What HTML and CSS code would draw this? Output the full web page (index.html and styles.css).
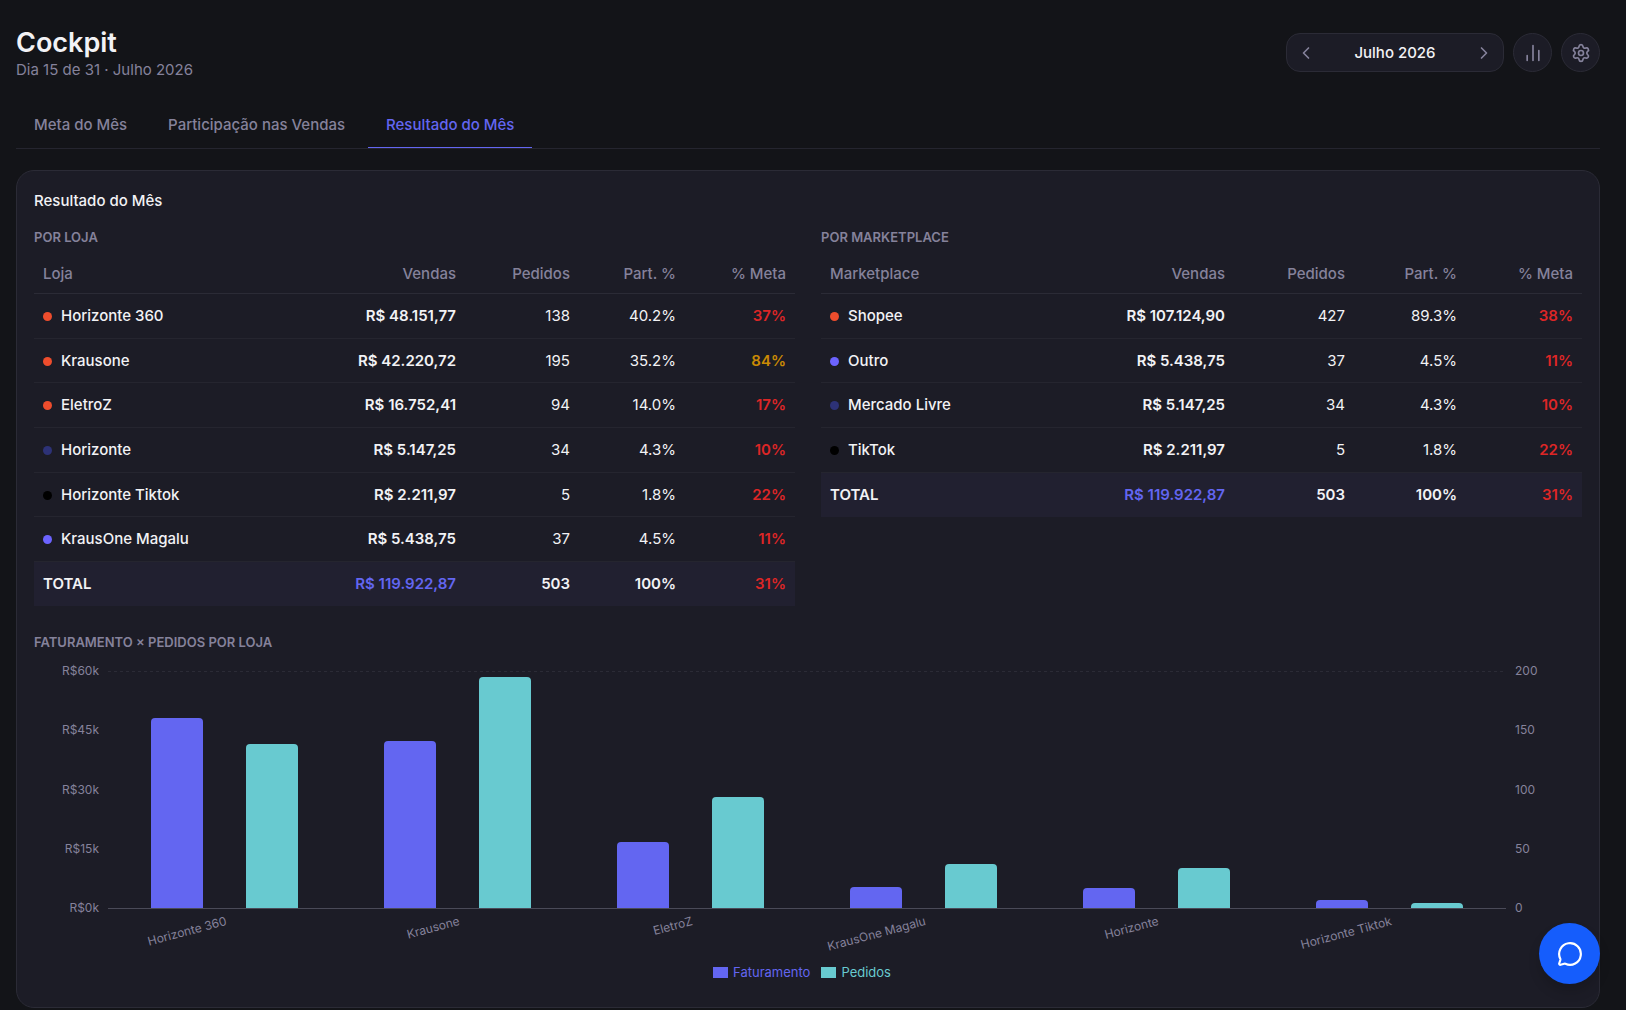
FILE: index.html
```html
<!DOCTYPE html>
<html lang="pt-BR">
<head>
<meta charset="utf-8">
<meta name="viewport" content="width=device-width, initial-scale=1">
<title>Cockpit</title>
<link rel="stylesheet" href="styles.css">
</head>
<body>
<main class="page">
  <header class="page-header">
    <div>
      <h1 class="page-title">Cockpit</h1>
      <p class="page-subtitle">Dia 15 de 31 · Julho 2026</p>
    </div>
    <div class="toolbar">
      <div class="month-picker">
        <button class="month-step" type="button" aria-label="Mês anterior">
          <svg class="icon" viewBox="0 0 24 24"><path d="m15 18-6-6 6-6"/></svg>
        </button>
        <span class="month-label">Julho 2026</span>
        <button class="month-step" type="button" aria-label="Próximo mês">
          <svg class="icon" viewBox="0 0 24 24"><path d="m9 18 6-6-6-6"/></svg>
        </button>
      </div>
      <button class="round-button" type="button" aria-label="Gráficos">
        <svg class="icon" viewBox="0 0 24 24"><path d="M5 21v-6M12 21V3M19 21V9"/></svg>
      </button>
      <button class="round-button" type="button" aria-label="Configurações">
        <svg class="icon" viewBox="0 0 24 24"><path d="M9.671 4.136a2.34 2.34 0 0 1 4.659 0 2.34 2.34 0 0 0 3.319 1.915 2.34 2.34 0 0 1 2.33 4.033 2.34 2.34 0 0 0 0 3.831 2.34 2.34 0 0 1-2.33 4.033 2.34 2.34 0 0 0-3.319 1.915 2.34 2.34 0 0 1-4.659 0 2.34 2.34 0 0 0-3.32-1.915 2.34 2.34 0 0 1-2.33-4.033 2.34 2.34 0 0 0 0-3.831A2.34 2.34 0 0 1 6.35 6.051a2.34 2.34 0 0 0 3.319-1.915"/><circle cx="12" cy="12" r="3"/></svg>
      </button>
    </div>
  </header>

  <nav class="tabs">
    <button class="tab" type="button">Meta do Mês</button>
    <button class="tab" type="button">Participação nas Vendas</button>
    <button class="tab tab-active" type="button" aria-current="page">Resultado do Mês</button>
  </nav>

  <section class="card">
    <h2 class="card-title">Resultado do Mês</h2>
    <div class="tables">
      <section>
        <h3 class="section-title">POR LOJA</h3>
        <table class="table">
          <colgroup><col><col class="col-vendas"><col class="col-pedidos"><col class="col-part"><col class="col-meta"></colgroup>
          <thead>
            <tr><th>Loja</th><th>Vendas</th><th>Pedidos</th><th>Part. %</th><th>% Meta</th></tr>
          </thead>
          <tbody>
            <tr><td><span class="dot dot-shopee"></span>Horizonte 360</td><td>R$ 48.151,77</td><td>138</td><td>40.2%</td><td class="low">37%</td></tr>
            <tr><td><span class="dot dot-shopee"></span>Krausone</td><td>R$ 42.220,72</td><td>195</td><td>35.2%</td><td class="mid">84%</td></tr>
            <tr><td><span class="dot dot-shopee"></span>EletroZ</td><td>R$ 16.752,41</td><td>94</td><td>14.0%</td><td class="low">17%</td></tr>
            <tr><td><span class="dot dot-mercado"></span>Horizonte</td><td>R$ 5.147,25</td><td>34</td><td>4.3%</td><td class="low">10%</td></tr>
            <tr><td><span class="dot dot-tiktok"></span>Horizonte Tiktok</td><td>R$ 2.211,97</td><td>5</td><td>1.8%</td><td class="low">22%</td></tr>
            <tr><td><span class="dot dot-outro"></span>KrausOne Magalu</td><td>R$ 5.438,75</td><td>37</td><td>4.5%</td><td class="low">11%</td></tr>
          </tbody>
          <tfoot>
            <tr><td>TOTAL</td><td>R$ 119.922,87</td><td>503</td><td>100%</td><td class="low">31%</td></tr>
          </tfoot>
        </table>
      </section>
      <section>
        <h3 class="section-title">POR MARKETPLACE</h3>
        <table class="table table-marketplace">
          <colgroup><col><col class="col-vendas"><col class="col-pedidos"><col class="col-part"><col class="col-meta"></colgroup>
          <thead>
            <tr><th>Marketplace</th><th>Vendas</th><th>Pedidos</th><th>Part. %</th><th>% Meta</th></tr>
          </thead>
          <tbody>
            <tr><td><span class="dot dot-shopee"></span>Shopee</td><td>R$ 107.124,90</td><td>427</td><td>89.3%</td><td class="low">38%</td></tr>
            <tr><td><span class="dot dot-outro"></span>Outro</td><td>R$ 5.438,75</td><td>37</td><td>4.5%</td><td class="low">11%</td></tr>
            <tr><td><span class="dot dot-mercado"></span>Mercado Livre</td><td>R$ 5.147,25</td><td>34</td><td>4.3%</td><td class="low">10%</td></tr>
            <tr><td><span class="dot dot-tiktok"></span>TikTok</td><td>R$ 2.211,97</td><td>5</td><td>1.8%</td><td class="low">22%</td></tr>
          </tbody>
          <tfoot>
            <tr><td>TOTAL</td><td>R$ 119.922,87</td><td>503</td><td>100%</td><td class="low">31%</td></tr>
          </tfoot>
        </table>
      </section>
    </div>

    <section class="chart-section">
      <h3 class="section-title">FATURAMENTO × PEDIDOS POR LOJA</h3>
      <svg class="chart" viewBox="0 0 1548 296" role="img" aria-label="Faturamento e pedidos por loja">
        <path class="grid-line" d="M74 10H1472"/>
        <path class="axis-line" d="M74 247H1472"/>
        <g class="bar-faturamento">
          <path d="M117 247V61a4 4 0 0 1 4-4h44a4 4 0 0 1 4 4V247z"/>
          <path d="M350 247V84a4 4 0 0 1 4-4h44a4 4 0 0 1 4 4V247z"/>
          <path d="M583 247V185a4 4 0 0 1 4-4h44a4 4 0 0 1 4 4V247z"/>
          <path d="M816 247V230a4 4 0 0 1 4-4h44a4 4 0 0 1 4 4V247z"/>
          <path d="M1049 247V231a4 4 0 0 1 4-4h44a4 4 0 0 1 4 4V247z"/>
          <path d="M1282 247V243a4 4 0 0 1 4-4h44a4 4 0 0 1 4 4V247z"/>
        </g>
        <g class="bar-pedidos">
          <path d="M212 247V87a4 4 0 0 1 4-4h44a4 4 0 0 1 4 4V247z"/>
          <path d="M445 247V20a4 4 0 0 1 4-4h44a4 4 0 0 1 4 4V247z"/>
          <path d="M678 247V140a4 4 0 0 1 4-4h44a4 4 0 0 1 4 4V247z"/>
          <path d="M911 247V207a4 4 0 0 1 4-4h44a4 4 0 0 1 4 4V247z"/>
          <path d="M1144 247V211a4 4 0 0 1 4-4h44a4 4 0 0 1 4 4V247z"/>
          <path d="M1377 247V246a4 4 0 0 1 4-4h44a4 4 0 0 1 4 4V247z"/>
        </g>
        <g class="tick tick-end">
          <text x="65" y="14">R$60k</text>
          <text x="65" y="73">R$45k</text>
          <text x="65" y="133">R$30k</text>
          <text x="65" y="192">R$15k</text>
          <text x="65" y="251">R$0k</text>
        </g>
        <g class="tick">
          <text x="1481" y="14">200</text>
          <text x="1481" y="73">150</text>
          <text x="1481" y="133">100</text>
          <text x="1481" y="192">50</text>
          <text x="1481" y="251">0</text>
        </g>
        <g class="tick tick-end">
          <text x="191" y="264" transform="rotate(-15 191 255)">Horizonte 360</text>
          <text x="424" y="264" transform="rotate(-15 424 255)">Krausone</text>
          <text x="657" y="264" transform="rotate(-15 657 255)">EletroZ</text>
          <text x="890" y="264" transform="rotate(-15 890 255)">KrausOne Magalu</text>
          <text x="1123" y="264" transform="rotate(-15 1123 255)">Horizonte</text>
          <text x="1356" y="264" transform="rotate(-15 1356 255)">Horizonte Tiktok</text>
        </g>
      </svg>
      <ul class="legend">
        <li class="legend-item legend-faturamento">Faturamento</li>
        <li class="legend-item legend-pedidos">Pedidos</li>
      </ul>
    </section>
  </section>
</main>
<button class="chat-button" type="button" aria-label="Abrir chat">
  <svg class="icon-chat" viewBox="0 0 24 24"><path d="M2.992 16.342a2 2 0 0 1 .094 1.167l-1.065 3.29a1 1 0 0 0 1.236 1.168l3.413-.998a2 2 0 0 1 1.099.092 10 10 0 1 0-4.777-4.719"/></svg>
</button>
</body>
</html>
```
FILE: styles.css
```css
:root {
  --bg: #131418;
  --card: #1c1c26;
  --border: #2b2b36;
  --border-soft: #25252f;
  --text: #f2f2f5;
  --muted: #85829b;
  --accent: #6366f1;
  --teal: #68cad0;
}

* { box-sizing: border-box; }

body {
  margin: 0;
  background: var(--bg);
  color: var(--text);
  font-family: Inter, sans-serif;
  font-size: 15px;
  line-height: 24px;
}

button {
  margin: 0;
  padding: 0;
  border: 0;
  background: none;
  color: inherit;
  font: inherit;
  cursor: pointer;
}

h1, h2, h3, p { margin: 0; }

.page { padding: 28px 26px 0 16px; }

.page-header {
  display: flex;
  justify-content: space-between;
  align-items: flex-start;
}

.page-title {
  font-size: 27px;
  font-weight: 600;
  line-height: 30px;
}

.page-subtitle { color: var(--muted); }

.toolbar {
  display: flex;
  gap: 9px;
  padding-top: 5px;
}

.month-picker {
  display: flex;
  align-items: center;
  width: 218px;
  height: 39px;
  border: 1px solid var(--border);
  border-radius: 14px;
  background: var(--card);
}

.month-step {
  display: flex;
  justify-content: center;
  align-items: center;
  width: 38px;
  height: 37px;
  color: var(--muted);
}

.month-label {
  flex: 1;
  text-align: center;
  font-weight: 500;
}

.round-button {
  display: flex;
  justify-content: center;
  align-items: center;
  width: 39px;
  height: 39px;
  border: 1px solid var(--border);
  border-radius: 50%;
  background: var(--card);
  color: var(--muted);
}

.icon, .icon-chat {
  width: 20px;
  height: 20px;
  fill: none;
  stroke: currentColor;
  stroke-width: 2;
  stroke-linecap: round;
  stroke-linejoin: round;
}

.icon-chat {
  width: 26px;
  height: 26px;
}

.tabs {
  display: flex;
  gap: 5px;
  margin-top: 18px;
  border-bottom: 1px solid var(--border-soft);
}

.tab {
  height: 48px;
  padding: 2px 18px 0;
  border-bottom: 1px solid transparent;
  color: var(--muted);
  font-weight: 500;
}

.tab-active {
  border-bottom-color: var(--accent);
  color: var(--accent);
}

.card {
  margin-top: 21px;
  padding: 17px;
  border: 1px solid var(--border);
  border-radius: 18px;
  background: var(--card);
}

.card-title {
  font-size: 15px;
  font-weight: 500;
  line-height: 26px;
}

.tables {
  display: grid;
  grid-template-columns: 1fr 1fr;
  align-items: start;
  gap: 26px;
  margin-top: 13px;
}

.section-title {
  font-size: 13px;
  font-weight: 600;
  line-height: 20px;
  color: var(--muted);
}

.table {
  width: 100%;
  margin-top: 7px;
  table-layout: fixed;
  border-spacing: 0;
}

.col-vendas { width: 180px; }
.col-pedidos { width: 114px; }
.col-part { width: 106px; }
.col-meta { width: 110px; }

.table-marketplace .col-pedidos { width: 120px; }
.table-marketplace .col-part { width: 112px; }
.table-marketplace .col-meta { width: 116px; }

.table th, .table td {
  height: 45px;
  padding: 0 9px;
  border-bottom: 1px solid var(--border-soft);
  text-align: right;
}

.table th {
  height: 40px;
  border-bottom-color: var(--border);
  color: var(--muted);
  font-weight: 500;
}

.table th:first-child, .table td:first-child { text-align: left; }

.table tbody tr:nth-child(3n + 2) td { height: 44px; }

.table td:first-child { font-weight: 500; }
.table td:nth-child(2), .table td:last-child { font-weight: 600; }

.table tfoot td {
  height: 44px;
  border-bottom: 0;
  background: #212030;
  font-weight: 600;
}

.table tfoot td:first-child { font-weight: 600; }
.table tfoot td:nth-child(2) { color: var(--accent); }
.table .low { color: #dc2626; }
.table .mid { color: #ca8a04; }

.dot {
  display: inline-block;
  width: 9px;
  height: 9px;
  margin-right: 9px;
  border-radius: 50%;
}

.dot-shopee { background: #ee4d2d; }
.dot-mercado { background: #2d3277; }
.dot-tiktok { background: #000; }
.dot-outro { background: #6c63ff; }

.chart-section { margin-top: 26px; }

.chart {
  display: block;
  width: 100%;
  height: auto;
  margin-top: 9px;
}

.grid-line, .axis-line {
  fill: none;
  stroke: var(--border);
  stroke-dasharray: 3 3;
  shape-rendering: crispEdges;
}

.axis-line {
  stroke: #4a4a58;
  stroke-dasharray: none;
}

.bar-faturamento { fill: var(--accent); }
.bar-pedidos { fill: var(--teal); }

.tick {
  fill: var(--muted);
  font-size: 12px;
}

.tick-end { text-anchor: end; }

.legend {
  display: flex;
  justify-content: center;
  gap: 11px;
  margin: 5px 0 0;
  padding: 0 12px 8px 0;
  list-style: none;
  font-size: 13px;
  line-height: 20px;
}

.legend-item {
  display: flex;
  align-items: center;
  gap: 5px;
}

.legend-item::before {
  content: "";
  width: 15px;
  height: 11px;
  background: currentColor;
}

.legend-faturamento { color: var(--accent); }
.legend-pedidos { color: var(--teal); }

.chat-button {
  display: flex;
  justify-content: center;
  align-items: center;
  position: fixed;
  right: 26px;
  bottom: 26px;
  width: 61px;
  height: 61px;
  border-radius: 50%;
  background: #155dfc;
  color: #fff;
  box-shadow: 0 8px 12px rgb(0 0 0 / 15%);
}
```
